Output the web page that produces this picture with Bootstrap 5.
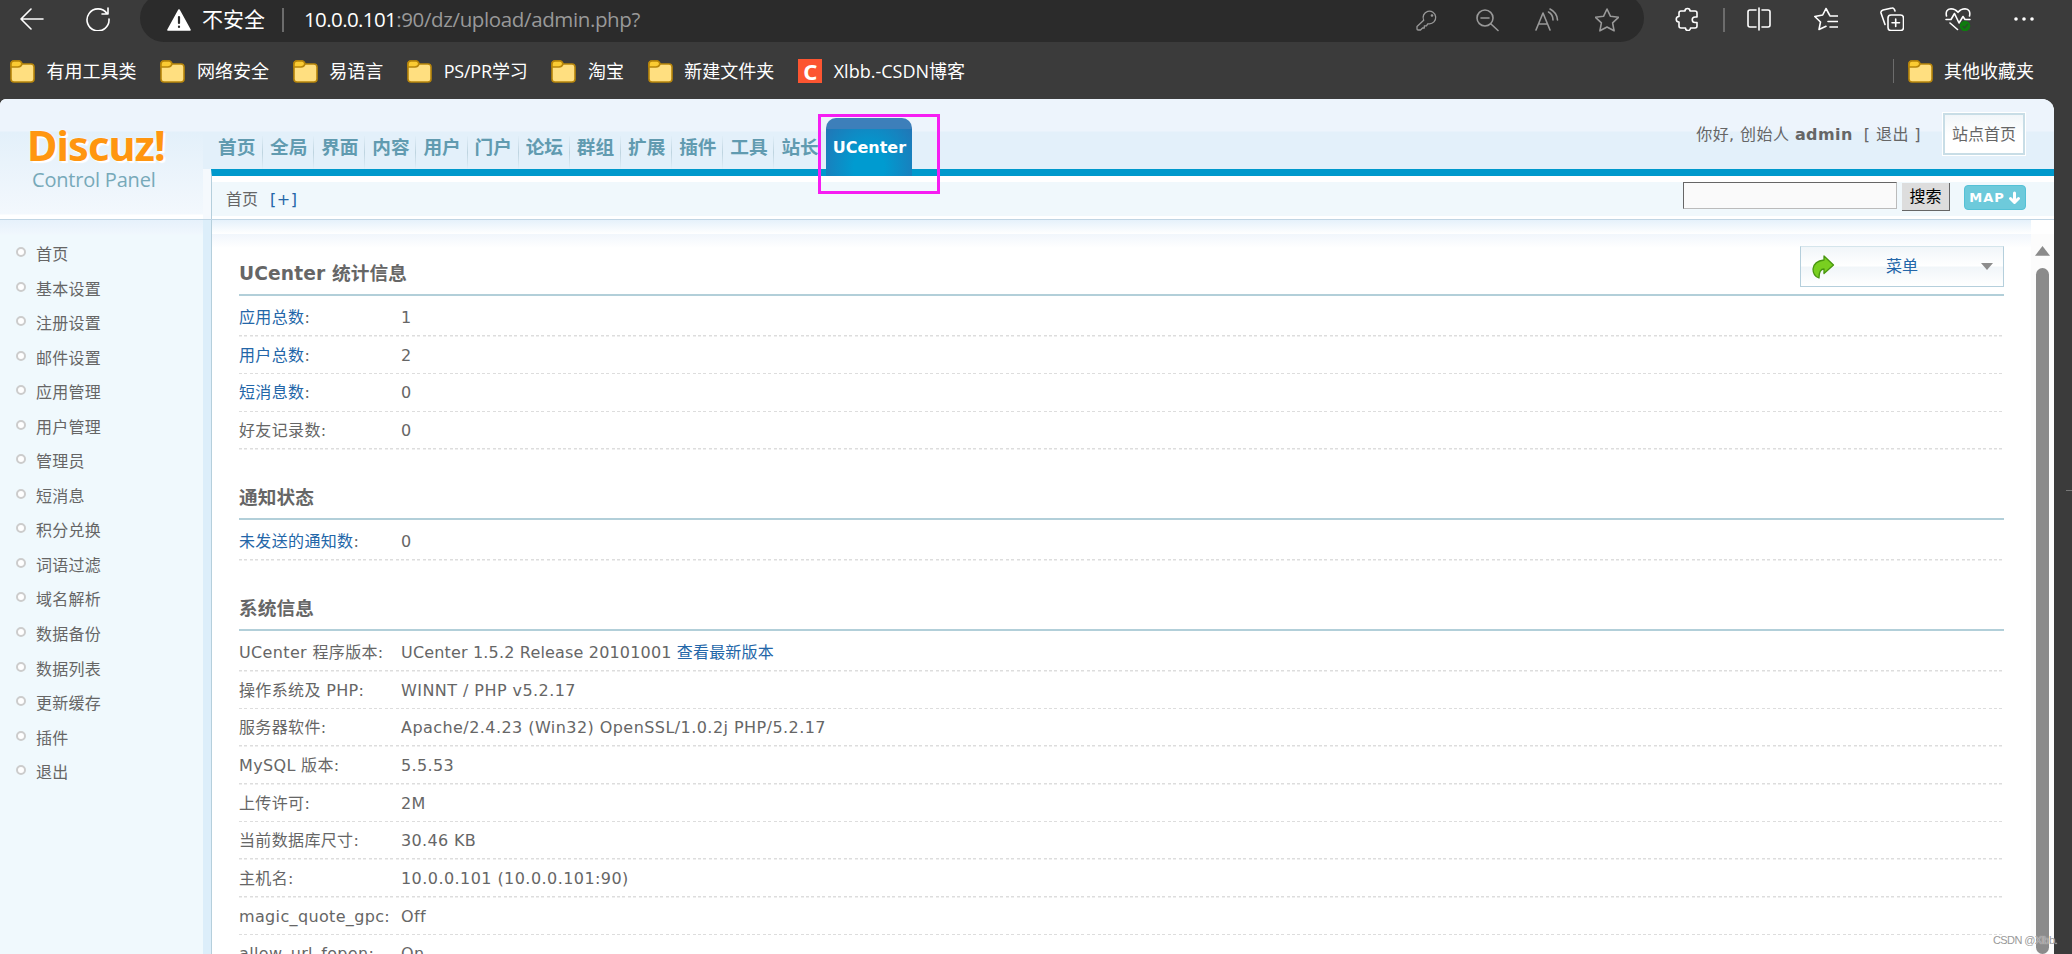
<!DOCTYPE html>
<html lang="zh-CN">
<head>
<meta charset="utf-8">
<title>Discuz! Control Panel</title>
<link href="https://cdn.jsdelivr.net/npm/bootstrap@5.3.0/dist/css/bootstrap.min.css" rel="stylesheet">
<script src="https://cdn.jsdelivr.net/npm/bootstrap@5.3.0/dist/js/bootstrap.bundle.min.js"></script>
<style>
:root{--ink:#666;--link:#2366a8;--rule:#b2cfd9}
html,body{height:954px;overflow:hidden}
body{background:#3b3b3b;color:var(--ink);font:16px/24px "DejaVu Sans","Noto Sans CJK SC",sans-serif}
a{color:var(--link);text-decoration:none}
svg{display:block;fill:none;stroke:currentColor;stroke-width:1.6;stroke-linecap:round;stroke-linejoin:round;flex:none}
/* browser chrome */
.chrome{height:99px;font-family:"Open Sans","Noto Sans CJK SC",sans-serif;color:#fff}
.toolbar{height:42px;padding-left:20px;overflow:hidden}
.toolbar>.tool{width:24px;height:24px;margin-top:7px}
.tool.reload{margin-left:42px}
.omnibox{width:1504px;height:48px;margin:-6px 0 0 30px;padding:3px 25px 0 27px;background:#2b2b2b;border-radius:24px;font-size:20.5px}
.omnibox .insecure{font-size:21px;margin-left:11px;margin-top:-2px}
.bar-sep{width:2px;height:24px;background:#6c6c6c}
.url{color:#999;white-space:nowrap;margin:-2px 0 0 20px;letter-spacing:-.37px}
.url b{color:#fff;font-weight:400;letter-spacing:-.6px}
.dim{color:#999;gap:36px}
.bookmarks{height:57px;padding:0 38px 0 10px;font-size:18px;white-space:nowrap;gap:23.9px}
.bookmarks>div{gap:11.5px}
.bookmarks .fold{width:25px;height:24px;stroke:#b8860b}
.tight{letter-spacing:-.2px}
.csdn{width:24px;height:24px;background:#fc5531;font:bold 22px/24px "Noto Sans",sans-serif;text-align:center}
/* page */
.page-shell{width:2054px;height:855px;background:#fff;border-radius:6px 12px 0 0}
.side-top{width:203px;height:120px;padding:23px 0 0 27px;background:linear-gradient(#edf4fc 0 32px,#e3f0fa 33px,#f3f8fd 115px,#fff 116px)}
.logo{font:bold 41.5px/46px "Noto Sans",sans-serif;color:#ff9610;letter-spacing:-.9px;text-shadow:0 0 2px #fff,2px 2px 1px #fff;height:47px;width:160px}
.logo-sub{font:20px/22px "Open Sans",sans-serif;color:#77a9b9;padding-left:5px;width:150px;letter-spacing:-.2px}
.gutter{width:8px}
.head{height:70px;background:linear-gradient(#edf4fc 0 32px,#e3f0fa 33px)}
.topnav{padding:37px 0 0 7px;font-weight:700;font-size:18.67px;line-height:24px;color:#619bb0}
.topnav li{width:51.15px;white-space:nowrap}
.topnav li+li{border:solid;border-width:0 0 0 1px;border-image:linear-gradient(#e3f0fa,#bed4e0,#e3f0fa) 1;padding-left:7px}
.topnav li:first-child{width:44px}
.topnav li:last-child{width:45px}
.tab-on{width:86px;height:58px;margin:19px 0 -7px 8px;background:linear-gradient(#3d7fba 0 11px,transparent 11px),radial-gradient(ellipse at 50% 85%,#009bd0 25%,#2770b2 100%);border-radius:10px 10px 0 0;color:#fff;font-weight:700;text-align:center;line-height:59px;position:relative;z-index:1}
.mark-box{position:absolute;left:-8px;top:-4px;width:122px;height:80px;border:3px solid #f61df2}
.hello{padding-top:24px;white-space:pre;letter-spacing:.42px}
.crumb{height:50px;border-top:7px solid #09c;background:linear-gradient(#fff 0 6px,#f0f8fc 6px 40px,#fff 40px);border-left:1px solid #b5cfdc;padding:0 28px 0 14px}
.crumb .here{padding-top:12px}
.home-btn{width:84px;height:44px;border:1px solid #fff;padding:0;margin:13px 28px 0 21px}
.home-btn span{display:block;height:42px;line-height:40px;border:2px solid #c8dde6;background:linear-gradient(#f1f6f9,#fff 20px);text-align:center}
.q{width:214px;height:27px;border:1px solid;border-color:#666 #bbb #bbb #666;border-radius:0;background:#fafafa;padding:0}
.go{width:48px;height:28px;border:0;border-right:1px solid #666;border-bottom:1px solid #666;background:#ddd;border-radius:0;color:#000;padding:0;line-height:28px;margin:1px 0 0 5px}
.mapbtn{width:62px;height:25px;background:#6dcadb;border:1px solid #55c1d6;border-radius:4px;color:#fff;font:bold 13px/23px "DejaVu Sans",sans-serif;letter-spacing:1px;margin:3px 0 0 14px}
.lower{height:735px;border-top:1px solid #c0d5e4}
.sidenav{width:203px;background:linear-gradient(#e6f1fb,#f0f7fd 14px,#f0f9fd 15px);padding:17px 0 0 16px;letter-spacing:.25px}
.sidenav li{height:34.55px;line-height:36.5px;display:flex}
.sidenav li::before{content:"";width:10px;height:10px;border:2px solid #ccc;border-radius:50%;background:#fff;margin:10px 10px 0 0}
.lower .gutter{background:#dceefa}
.main{border-left:1px solid #b5cfdc;background:linear-gradient(#e5f1fb,#fff 14px,#f1f6fc 14px,#fff 28px);padding:0 27px 0 27px;height:734px;overflow:hidden}
.sect{height:70.3px;padding-top:35px;border-bottom:2px solid var(--rule);margin-bottom:3px;font-size:18.67px;font-weight:700;line-height:26px;letter-spacing:.12px}
.sect.top{height:76px;padding-top:41px;position:relative}
.inforow{height:37.68px;line-height:38.6px;letter-spacing:.35px;background:repeating-linear-gradient(90deg,#ddd 0 3px,#fff 3px 5.4px) 0 100%/calc(100% - 2px) 1.5px no-repeat;white-space:nowrap}
.inforow>span:first-child{width:162px;flex:none}
.inforow>.wide{letter-spacing:.44px}
.inforow>.slim{letter-spacing:.17px}
.menu{position:absolute;right:0;top:26px;width:204px;height:41px;border:1px solid #b5cfdc;border-top-color:#d5e5ec;background:linear-gradient(#f1f6f9,#fff 19px,#f1f6f9 20px,#fff);font-size:16px;font-weight:400;padding:0 10px 0 10px}
.menu a{margin-right:12px}
.caret{border:6px solid transparent;border-top:7px solid #8d8d8d;border-bottom:0}
.scrollcol{width:23px;margin-top:14px;background:#fcfcfc;padding-top:12px}
.scrollcol i{width:15px;height:10px;background:#8b8b8b;clip-path:polygon(50% 0,100% 100%,0 100%)}
.scrollcol b{width:13px;height:700px;background:#8b8b8b;border-radius:7px;margin-top:12px}
.wm{position:absolute;left:1993px;top:930px;font:11px/20px "Liberation Sans",sans-serif;letter-spacing:-.6px;color:#999;text-shadow:0 0 1px #fff;white-space:nowrap}
.edge-tick{position:absolute;right:0;top:490px;width:6px;height:1px;background:#777}
</style>
</head>
<body>
<svg width="0" height="0" class="position-absolute"><defs>
<symbol id="folder" viewBox="0 0 25 24"><path d="M1 5q0-3 3-3h5q2 0 3 3h9q3 0 3 3v12q0 3-3 3H4q-3 0-3-3z" fill="#ffdf80"/><path d="M1 8V5q0-3 3-3h5q2 0 3 3-1 3-4 3z" fill="#fbcb33"/></symbol>
</defs></svg>
<header class="chrome">
 <div class="toolbar d-flex">
  <svg class="tool" viewBox="0 0 24 24"><path d="M23 12H1M11 2 1 12l10 10"/></svg>
  <svg class="tool reload" viewBox="0 0 24 24"><path d="M21 6.500A11 11 0 1 0 23 12M22 1v6h-6"/></svg>
  <div class="omnibox d-flex align-items-center">
   <svg width="24" height="24" viewBox="0 0 24 24"><path d="M12 2 1 22h22z" fill="#fff"/><path d="M12 9v6M12 18.500v.5" stroke="#2b2b2b" stroke-width="2.200"/></svg>
   <span class="insecure">不安全</span>
   <div class="bar-sep" style="margin-left:17px"></div>
   <div class="url"><b>10.0.0.101</b>:90/dz/upload/admin.php?</div>
   <div class="dim d-flex ms-auto">
    <svg width="24" height="24" viewBox="0 0 24 24" style="stroke-width:1.3"><path d="M8.700 12.200A6.300 6.300 0 1 1 14 15.800l-1.300 0-1.200 2H9.300v2.200H7.500L5.500 22H3.200Q2 22 2 20.800v-2.300z"/><circle cx="17" cy="7.500" r=".7" fill="currentColor"/></svg>
    <svg width="24" height="24" viewBox="0 0 24 24"><circle cx="10" cy="10" r="8"/><path d="M16 16l7 6.500M6 10h8"/></svg>
    <svg width="24" height="24" viewBox="0 0 24 24"><path d="M1 22 8 5l7 17M3.500 16h9M13.500 4q4.500 2.500 4.500 8M15 1q7 3.500 7.500 11"/></svg>
    <svg width="24" height="24" viewBox="0 0 24 24"><path d="m12 1 3.500 7.300 8 1-5.900 5.500 1.500 8L12 19l-7.100 3.800 1.500-8L.5 9.300l8-1z"/></svg>
   </div>
  </div>
  <svg class="tool" style="margin-left:31px" viewBox="0 0 24 24"><path d="M6 4h4a2.500 2.500 0 0 1 5 0h5q2 0 2 2v4h-2a2.700 2.700 0 0 0 0 5.500h2V19q0 2-2 2h-4.500a2.500 2.500 0 0 1-5 0H6q-2 0-2-2v-4a2.700 2.700 0 0 1 0-5.500V6q0-2 2-2z"/></svg>
  <div class="bar-sep" style="margin:8px 22px 0 24px"></div>
  <svg class="tool" viewBox="0 0 24 24"><path d="M9 3H3Q1 3 1 5v13q0 2 2 2h6M15 3h6q2 0 2 2v13q0 2-2 2h-6M12 1v22"/></svg>
  <svg class="tool" style="margin-left:43px" viewBox="0 0 24 24"><path d="M15.500 8 12 1.500 8.700 8 .8 9.500l5.700 5.500L5 22.500l7-3.200M16 9h8M14 14.500h10M16 20h8"/></svg>
  <svg class="tool" style="margin-left:42px" viewBox="0 0 24 24"><rect x="8" y="8" width="15.500" height="15.500" rx="3"/><path d="M15.700 12v7.500M12 15.800h7.500M5 17.500 1 6q-.5-2 2-3l9-2q2-.5 3 3"/></svg>
  <svg class="tool" style="margin-left:41px;width:26px" viewBox="0 0 26 24"><path d="M1.500 9Q0 2.500 6 1.800q4 0 7 3.500 3-3.500 7-3.500 6 .7 4.500 7.200M1 12.500h5l3.500-6L14 16l4-6.500 2 3h5M5 16l7.500 6.500"/><circle cx="20" cy="19" r="4.500" fill="#0f7b0f" stroke="#0f7b0f"/><path d="m18 19.500 1.500 1.500 3-3.500" style="stroke:#2b4a2b;stroke-width:1.2"/></svg>
  <svg class="tool" style="margin-left:41px" viewBox="0 0 24 24"><path d="M4 12h.01M12 12h.01M20 12h.01" style="stroke-width:3.6"/></svg>
 </div>
 <div class="bookmarks d-flex align-items-center">
  <div class="d-flex align-items-center"><svg class="fold"><use href="#folder"/></svg>有用工具类</div>
  <div class="d-flex align-items-center"><svg class="fold"><use href="#folder"/></svg>网络安全</div>
  <div class="d-flex align-items-center"><svg class="fold"><use href="#folder"/></svg>易语言</div>
  <div class="d-flex align-items-center tight"><svg class="fold"><use href="#folder"/></svg>PS/PR学习</div>
  <div class="d-flex align-items-center"><svg class="fold"><use href="#folder"/></svg>淘宝</div>
  <div class="d-flex align-items-center"><svg class="fold"><use href="#folder"/></svg>新建文件夹</div>
  <div class="d-flex align-items-center"><div class="csdn">C</div>Xlbb.-CSDN博客</div>
  <div class="d-flex align-items-center ms-auto"><div class="bar-sep" style="width:1px"></div><svg class="fold" style="margin-left:2px"><use href="#folder"/></svg>其他收藏夹</div>
 </div>
</header>
<div class="page-shell overflow-hidden">
 <div class="d-flex">
  <div class="side-top"><div class="logo">Discuz!</div><div class="logo-sub">Control Panel</div></div>
  <div class="flex-grow-1">
   <div class="head d-flex">
    <ul class="topnav list-unstyled d-flex mb-0 ms-2"><li>首页</li><li>全局</li><li>界面</li><li>内容</li><li>用户</li><li>门户</li><li>论坛</li><li>群组</li><li>扩展</li><li>插件</li><li>工具</li><li>站长</li></ul>
    <div class="tab-on">UCenter<div class="mark-box"></div></div>
    <div class="ms-auto hello">你好, 创始人 <b>admin</b>  [ 退出 ]</div>
    <div class="home-btn"><span>站点首页</span></div>
   </div>
   <div class="d-flex"><div class="gutter" style="background:#f5f9fd"></div>
    <div class="crumb d-flex flex-grow-1">
     <div class="here">首页</div><a class="here" style="margin-left:12px;letter-spacing:.5px" href="#">[+]</a>
     <div class="ms-auto d-flex" style="padding-top:6px"><input class="q form-control" type="text"><button class="go btn">搜索</button>
     <div class="mapbtn d-flex align-items-center justify-content-center">MAP<svg width="13" height="14" viewBox="0 0 13 14" style="stroke-width:3;margin-left:3px"><path d="M6.500 2v9M2.500 7.500l4 4 4-4"/></svg></div></div>
    </div>
   </div>
  </div>
 </div>
 <div class="lower d-flex">
  <ul class="sidenav list-unstyled mb-0"><li>首页</li><li>基本设置</li><li>注册设置</li><li>邮件设置</li><li>应用管理</li><li>用户管理</li><li>管理员</li><li>短消息</li><li>积分兑换</li><li>词语过滤</li><li>域名解析</li><li>数据备份</li><li>数据列表</li><li>更新缓存</li><li>插件</li><li>退出</li></ul>
  <div class="gutter"></div>
  <main class="main flex-grow-1">
   <div class="sect top">UCenter 统计信息
    <div class="menu d-flex align-items-center justify-content-between"><svg width="24" height="24" viewBox="0 0 24 24"><path d="M13 1 22.500 10 13 18.500V14q-5 0-5 9-6-2-6-9 1-8 11-9z" fill="#79cf20" stroke="#48960f" style="stroke-width:1.3"/></svg><a href="#">菜单</a><div class="caret"></div></div>
   </div>
   <div class="inforow d-flex"><span><a href="#">应用总数</a>:</span><span>1</span></div>
   <div class="inforow d-flex"><span><a href="#">用户总数</a>:</span><span>2</span></div>
   <div class="inforow d-flex"><span><a href="#">短消息数</a>:</span><span>0</span></div>
   <div class="inforow d-flex"><span>好友记录数:</span><span>0</span></div>
   <div class="sect">通知状态</div>
   <div class="inforow d-flex"><span><a href="#">未发送的通知数</a>:</span><span>0</span></div>
   <div class="sect">系统信息</div>
   <div class="inforow d-flex"><span>UCenter 程序版本:</span><span class="slim">UCenter 1.5.2 Release 20101001 <a href="#">查看最新版本</a></span></div>
   <div class="inforow d-flex"><span>操作系统及 PHP:</span><span class="wide">WINNT / PHP v5.2.17</span></div>
   <div class="inforow d-flex"><span>服务器软件:</span><span class="wide">Apache/2.4.23 (Win32) OpenSSL/1.0.2j PHP/5.2.17</span></div>
   <div class="inforow d-flex"><span>MySQL 版本:</span><span>5.5.53</span></div>
   <div class="inforow d-flex"><span>上传许可:</span><span>2M</span></div>
   <div class="inforow d-flex"><span>当前数据库尺寸:</span><span>30.46 KB</span></div>
   <div class="inforow d-flex"><span>主机名:</span><span class="wide">10.0.0.101 (10.0.0.101:90)</span></div>
   <div class="inforow d-flex"><span>magic_quote_gpc:</span><span>Off</span></div>
   <div class="inforow d-flex"><span>allow_url_fopen:</span><span>On</span></div>
  </main>
  <div class="scrollcol d-flex flex-column align-items-center"><i></i><b></b></div>
 </div>
</div>
<div class="edge-tick"></div>
<div class="wm">CSDN @Xlbb.</div>
</body>
</html>
